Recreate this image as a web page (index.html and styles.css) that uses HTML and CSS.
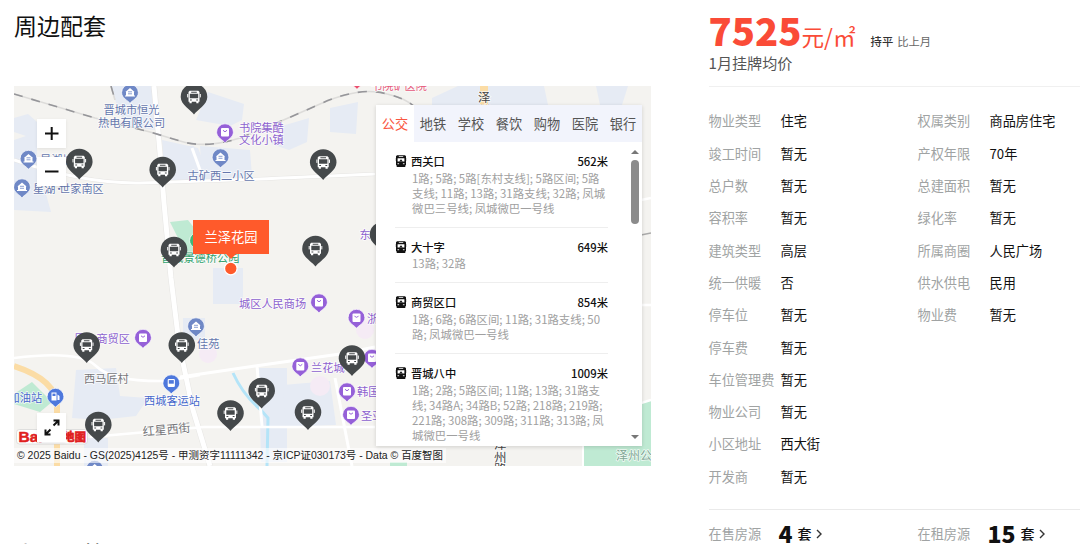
FILE: index.html
```html
<!DOCTYPE html>
<html lang="zh-CN">

<head>
    <meta charset="UTF-8">
    <meta name="viewport" content="width=device-width, initial-scale=1.0">
    <title>兰泽花园</title>
    <link rel="stylesheet" href="styles.css">
</head>

<body>
    <div class="wrapper">
        <div class="main">
            <h2 class="title">周边配套</h2>
            <div class="map">
                <svg class="map-bg" viewBox="14 86 637 380">
                    <defs>
                        <g id="bus">
                            <path d="M0 17.5 C-3 13 -13.3 8 -13.3 0 A13.3 13.3 0 0 1 13.3 0 C13.3 8 3 13 0 17.5Z" fill="#45494b" />
                            <path d="M-4.3 -6.3h8.6l1.2 1.3v9.8h-1v1.4h-2.2v-1.4h-4.6v1.4h-2.2v-1.4h-1v-9.8z" fill="#fff" />
                            <path d="M-6.3 -3v3.4M6.3 -3v3.4" stroke="#fff" stroke-width="1" />
                            <path d="M-4.2 -3.2h8.4v4.4h-8.4zM-2.8 -5.2h5.6v.9h-5.6zM-4 2.5h1.8v1h-1.8zM2.2 2.5h1.8v1h-1.8z" fill="#45494b" />
                        </g>
                        <path id="pin" d="M0 10.3 C-2 7.5 -8.4 5 -8.4 -.3 A8.4 8.4 0 0 1 8.4 -.3 C8.4 5 2 7.5 0 10.3Z" stroke="#fff" stroke-width=".7" />
                        <g id="shop">
                            <use href="#pin" fill="#9560d8" />
                            <rect x="-4" y="-4.5" width="8" height="8.5" rx="1" fill="#fff" />
                            <path d="M-2 -2.2q2 3 4 0" fill="none" stroke="#9560d8" stroke-width="1" />
                        </g>
                        <g id="home">
                            <use href="#pin" fill="#6f88c6" />
                            <path d="M-5 3.5V2.5h1V-1h-.6L0 -5l4.6 4H4v3.5h1v1z" fill="#fff" />
                            <path d="M-2 -1.2h4M-2 .8h4" stroke="#6f88c6" stroke-width=".8" />
                        </g>
                    </defs>

                    <rect x="14" y="86" width="637" height="380" fill="#f4f3f0" />
                    <!-- 地块 -->
                    <g fill="#e6ebf4">
                        <path d="M14 118l14-4 9 8v40l14 50-37-2v-70l12-4-12-4z" />
                        <path d="M111 86h42l2 44-30-4-8-20z" />
                        <path d="M162 140l36 8 12 30-45 4z" />
                        <path d="M180 146h14l12 34h-26z" />
                        <path d="M208 92l36 12-2 16-12 6-34-6z" />
                        <path d="M200 146l50 4 2 26-50 4z" />
                        <path d="M282 126l27-8-2 24-18 8-18-6z" />
                        <path d="M330 108l28-6-2 32-26-2z" />
                        <path d="M213 268h30v36h-30z" />
                        <path d="M76 370l40-2 4 28 28 2-12 18-36 4-28-2z" />
                        <path d="M84 438h24v28h-24z" />
                        <path d="M183 318h22v22h-22z" />
                        <path d="M259 368h28v94h-26z" />
                        <path d="M283 385l47-4 6 44-50 2z" />
                        <path d="M432 98l26-12h86l4 19H432z" />
                        <path d="M596 86h32l-6 19h-22z" />
                    </g>
                    <g fill="#f5ebf5">
                        <circle cx="208" cy="354" r="9" />
                        <circle cx="320" cy="386" r="10" />
                        <circle cx="365" cy="330" r="9" />
                    </g>
                    <g fill="#bfead3">
                        <path d="M14 394l18-12 20 20-12 10-26-8z" />
                        <path d="M170 222l18-2 14 18v16h-16z" />
                        <path d="M583 446l1-36 67-10v66h-68z" />
                        <path d="M390 462h17v4h-17z" />
                    </g>
                    <!-- 河 -->
                    <path d="M233 373q10 22 28 37l7 8-1 48" fill="none" stroke="#b4e4f8" stroke-width="3" />
                    <!-- 道路 -->
                    <g fill="none" stroke="#e6e5e3" stroke-linejoin="round">
                        <path d="M154 86l6 67 4 50 7 75 8 66 14 66 17 56" stroke-width="6" />
                        <path d="M14 160q70 24 126 23t235-9" stroke-width="4" />
                    </g>
                    <g fill="none" stroke="#fff" stroke-linejoin="round">
                        <path d="M154 86l6 67 4 50 7 75 8 66 14 66 17 56" stroke-width="5" />
                        <path d="M14 160q70 24 126 23t235-9" stroke-width="3" />
                        <path d="M14 358q66-8 82 8t70 15l34-6" stroke-width="2.5" />
                        <path d="M180 377l75-11 85-12 35-7" stroke-width="3" />
                        <path d="M90 437l114-10h171" stroke-width="2.5" />
                        <path d="M257 366l5 60M335 378l17 88" stroke-width="3" />
                        <path d="M192 148l12 33" stroke-width="3" />
                        <path d="M641 200l10-2M641 305h10M641 403l10-3" stroke-width="2.5" />
                        <path d="M583 446v20" stroke-width="2" />
                    </g>
                    <path d="M14 366q43 14 43 40v60" fill="none" stroke="#fbdca5" stroke-width="6" />
                    <path d="M484 86v20" stroke="#fbdca5" stroke-width="8" />
                    <!-- 铁路 -->
                    <g fill="none" stroke-width="1.6">
                        <path d="M14 94l81 24 55 14 30 9q25 8 60-3 40-16 80-34 40-18 67-10 18 4 28 13M111 86l4 14" stroke="#dddcda" />
                        <path d="M14 94l81 24 55 14 30 9q25 8 60-3 40-16 80-34 40-18 67-10 18 4 28 13M111 86l4 14" stroke="#96969a" stroke-dasharray="9 9" />
                        <path d="M641 235l10-2" stroke="#aaa" />
                    </g>

                    <!-- 地名 -->
                    <g class="label blue">
                        <text x="103.5" y="114">晋城市恒光</text>
                        <text x="98" y="126.5">热电有限公司</text>
                        <text x="187.5" y="179.5">古矿西二小区</text>
                        <text x="40" y="164">星湖城</text>
                        <text x="33" y="193">星湖<tspan x="53.5">·</tspan><tspan x="59">世家南区</tspan></text>
                        <text x="197" y="348">佳苑</text>
                    </g>
                    <g class="label purple">
                        <text x="239" y="131.5">书院集酷</text>
                        <text x="239" y="144">文化小镇</text>
                        <text x="239" y="307.5">城区人民商场</text>
                        <text x="74" y="343">凤台商贸区</text>
                        <text x="367" y="323">浙</text>
                        <text x="311" y="371.5">兰花城</text>
                        <text x="357" y="396">韩国</text>
                        <text x="361" y="420">圣亚</text>
                        <text x="359.5" y="239">东</text>
                    </g>
                    <g class="label sky">
                        <text x="144" y="404.5">西城客运站</text>
                        <text x="8.5" y="401.5">加油站</text>
                    </g>
                    <g class="label gray">
                        <text x="84" y="383">西马匠村</text>
                        <text x="143" y="436" transform="rotate(-5 143 436)" class="street">红星西街</text>
                    </g>
                    <g class="label dark">
                        <text x="478" y="101.5">泽</text>
                        <text x="478" y="115">州</text>
                        <text x="494" y="449">泽</text>
                        <text x="494" y="461.5">州</text>
                        <text x="494" y="474">路</text>
                    </g>
                    <text class="label green" x="161" y="262">晋城景德桥公园</text>
                    <text class="label park" x="616" y="459.5">泽州公园</text>
                    <text class="label red" x="371" y="90">书院矿医院</text>

                    <!-- 小图标 -->
                    <use href="#home" x="130" y="93" />
                    <use href="#home" x="28.5" y="159" />
                    <use href="#home" x="22" y="187.5" />
                    <use href="#home" x="220.5" y="157.5" />
                    <use href="#home" x="196" y="326.5" />
                    <use href="#shop" x="225" y="132.5" />
                    <use href="#shop" x="319" y="302.5" />
                    <use href="#shop" x="143" y="338" />
                    <use href="#shop" x="356.5" y="318" />
                    <use href="#shop" x="300.3" y="366.5" />
                    <use href="#shop" x="372" y="358" />
                    <use href="#shop" x="347" y="391.5" />
                    <use href="#shop" x="351" y="415" />
                    <use href="#pin" x="357" y="79" fill="#ea4f6e" />
                    <use href="#pin" x="198" y="241" fill="#3fb878" />
                    <g transform="translate(55.5 397)">
                        <use href="#pin" fill="#4e78dc" />
                        <path d="M-4 -4.5h5v8h-5zM2 -2.5l2 1.5v4h-2" fill="#fff" />
                        <path d="M-3 -3.4h3v2.4h-3z" fill="#4e78dc" />
                    </g>
                    <g transform="translate(171.3 383.5)">
                        <use href="#pin" fill="#4e78dc" />
                        <rect x="-3.6" y="-4.6" width="7.2" height="8" rx="1.2" fill="#fff" />
                        <path d="M-2.5 -3.4h5v3.6h-5z" fill="#4e78dc" />
                    </g>
                    <use href="#home" x="94.7" y="469" />

                    <!-- 百度 logo -->
                    <rect x="16.5" y="429.5" width="71" height="14.5" rx="3" fill="#fff" stroke="#ccc" stroke-width=".6" />
                    <text class="logo" x="18.5" y="442">Bai</text>
                    <text class="logo logo-cn" x="63" y="441">地图</text>

                    <!-- 公交站点 -->
                    <use href="#bus" x="194" y="97" />
                    <use href="#bus" x="79.3" y="162" />
                    <use href="#bus" x="162.7" y="170" />
                    <use href="#bus" x="174" y="250" />
                    <use href="#bus" x="323.2" y="162.5" />
                    <use href="#bus" x="315.5" y="249" />
                    <use href="#bus" x="383" y="235" />
                    <use href="#bus" x="86.7" y="345.5" />
                    <use href="#bus" x="181.8" y="345.5" />
                    <use href="#bus" x="98.3" y="425" />
                    <use href="#bus" x="230.5" y="413.5" />
                    <use href="#bus" x="261.7" y="391" />
                    <use href="#bus" x="308" y="412.5" />
                    <use href="#bus" x="352" y="358.5" />

                    <circle cx="230.8" cy="268.5" r="6.3" fill="#ff5a2b" stroke="#fff" stroke-width="1.3" />
                </svg>

                <div class="tip">兰泽花园</div>
                <div class="btn zoom-in"><svg viewBox="0 0 29 29"><path d="M8 14.5h13.5M14.7 8v13" /></svg></div>
                <div class="btn zoom-out"><svg viewBox="0 0 29 29"><path d="M8 14.5h13.5" /></svg></div>
                <div class="btn full"><svg viewBox="0 0 29 29"><path d="M16.5 7.5h5v5M21.5 7.5l-5 5M8.5 16.5v5h5M8.5 21.5l5-5" /></svg></div>
                <div class="copyright">© 2025 Baidu - GS(2025)4125号 - 甲测资字11111342 - 京ICP证030173号 - Data © 百度智图</div>

                <div class="panel">
                    <ul class="tabs">
                        <li class="active">公交</li>
                        <li>地铁</li>
                        <li>学校</li>
                        <li>餐饮</li>
                        <li>购物</li>
                        <li>医院</li>
                        <li>银行</li>
                    </ul>
                    <div class="content">
                        <ul class="list">
                            <li>
                                <div class="name">
                                    <svg class="ico" viewBox="0 0 12 12"><use href="#train" /></svg>
                                    <span>西关口</span><em>562米</em>
                                </div>
                                <p>1路; 5路; 5路[东村支线]; 5路区间; 5路<br>支线; 11路; 13路; 31路支线; 32路; 凤城<br>微巴三号线; 凤城微巴一号线</p>
                            </li>
                            <li>
                                <div class="name">
                                    <svg class="ico" viewBox="0 0 12 12"><use href="#train" /></svg>
                                    <span>大十字</span><em>649米</em>
                                </div>
                                <p>13路; 32路</p>
                            </li>
                            <li>
                                <div class="name">
                                    <svg class="ico" viewBox="0 0 12 12"><use href="#train" /></svg>
                                    <span>商贸区口</span><em>854米</em>
                                </div>
                                <p>1路; 6路; 6路区间; 11路; 31路支线; 50<br>路; 凤城微巴一号线</p>
                            </li>
                            <li>
                                <div class="name">
                                    <svg class="ico" viewBox="0 0 12 12">
                                        <g id="train">
                                            <path d="M2 .2h8L11 1.2v8.8L10 11l.6 1H1.4L2 11l-1-1V1.2z" fill="#111" />
                                            <path d="M2.6 3.2h6.8v3.3H2.6zM3.8 1.3h4.4v.7H3.8z" fill="#fff" />
                                            <path d="M4.2 6.5L6 4.2l1.8 2.3z" fill="#111" />
                                            <path d="M2.5 8h1.6v1.2H2.5zM7.9 8h1.6v1.2H7.9zM0 3h.6v3H0zM11.4 3h.6v3h-.6z" fill="#bbb" />
                                        </g>
                                    </svg>
                                    <span>晋城八中</span><em>1009米</em>
                                </div>
                                <p>1路; 2路; 5路区间; 11路; 13路; 31路支<br>线; 34路A; 34路B; 52路; 218路; 219路;<br>221路; 308路; 309路; 311路; 313路; 凤<br>城微巴一号线</p>
                            </li>
                        </ul>
                        <div class="scroll">
                            <i class="up"></i>
                            <i class="thumb"></i>
                            <i class="down"></i>
                        </div>
                    </div>
                </div>
            </div>
            <h2 class="title next">小区问答</h2>
        </div>

        <div class="side">
            <div class="price">
                <div class="num"><b>7525</b><span class="unit">元/㎡</span><span class="trend">持平</span><span class="compare">比上月</span></div>
                <p>1月挂牌均价</p>
            </div>
            <div class="info">
                <div class="cell"><label>物业类型</label><span>住宅</span></div>
                <div class="cell"><label>权属类别</label><span>商品房住宅</span></div>
                <div class="cell"><label>竣工时间</label><span>暂无</span></div>
                <div class="cell"><label>产权年限</label><span>70年</span></div>
                <div class="cell"><label>总户数</label><span>暂无</span></div>
                <div class="cell"><label>总建面积</label><span>暂无</span></div>
                <div class="cell"><label>容积率</label><span>暂无</span></div>
                <div class="cell"><label>绿化率</label><span>暂无</span></div>
                <div class="cell"><label>建筑类型</label><span>高层</span></div>
                <div class="cell"><label>所属商圈</label><span>人民广场</span></div>
                <div class="cell"><label>统一供暖</label><span>否</span></div>
                <div class="cell"><label>供水供电</label><span>民用</span></div>
                <div class="cell"><label>停车位</label><span>暂无</span></div>
                <div class="cell"><label>物业费</label><span>暂无</span></div>
                <div class="cell row"><label>停车费</label><span>暂无</span></div>
                <div class="cell row"><label>车位管理费</label><span>暂无</span></div>
                <div class="cell row"><label>物业公司</label><span>暂无</span></div>
                <div class="cell row"><label>小区地址</label><span>西大街</span></div>
                <div class="cell row"><label>开发商</label><span>暂无</span></div>
            </div>
            <div class="house">
                <div class="cell"><label>在售房源</label><b>4</b><span>套</span><svg class="arrow" viewBox="0 0 6 10"><path d="M1 1l4 4-4 4" /></svg></div>
                <div class="cell"><label>在租房源</label><b>15</b><span>套</span><svg class="arrow" viewBox="0 0 6 10"><path d="M1 1l4 4-4 4" /></svg></div>
            </div>
        </div>
    </div>
</body>

</html>
```
FILE: styles.css
```css
* {
    padding: 0;
    margin: 0;
    list-style: none;
    box-sizing: border-box;
}

body {
    height: 544px;
    overflow: hidden;
    background-color: #fff;
    font-family: "Noto Sans CJK SC", sans-serif;
    color: #111;
}

.wrapper {
    display: flex;
    height: 544px;
    padding-left: 14px;
    overflow: hidden;
}

.main {
    width: 637px;
    flex-shrink: 0;
}

.title {
    height: 86px;
    padding-top: 8px;
    font-size: 23px;
    font-weight: 400;
    line-height: 34px;
}

.title.next {
    margin-top: 62px;
}

/* 地图 */
.map {
    position: relative;
    height: 380px;
    overflow: hidden;
}

.map-bg {
    display: block;
    width: 637px;
    height: 380px;
}

.label {
    font-size: 11.2px;
    paint-order: stroke;
    stroke: #fff;
    stroke-width: 1.5px;
    stroke-opacity: .8;
}

.blue {
    fill: #6577ad;
}

.purple {
    fill: #8d62cf;
}

.sky {
    fill: #4668cc;
}

.gray {
    fill: #77777a;
}

.street {
    font-size: 12px;
}

.dark {
    font-size: 12.5px;
    fill: #444;
}

.green {
    fill: #2fa06c;
}

.park {
    font-size: 12px;
    fill: #7fa694;
}

.red {
    fill: #e5587a;
}

.logo {
    font-family: "Liberation Sans", sans-serif;
    font-size: 15.5px;
    font-weight: 700;
    fill: #e02020;
    stroke: #e02020;
    stroke-width: .5px;
}

.logo-cn {
    font-family: "Noto Sans CJK SC", sans-serif;
    font-size: 11.5px;
    font-weight: 900;
}

.tip {
    position: absolute;
    left: 179px;
    top: 134px;
    width: 76px;
    height: 34px;
    background-color: #ff5a2b;
    color: #fff;
    font-size: 13.3px;
    line-height: 34px;
    text-align: center;
}

.tip::after {
    content: '';
    position: absolute;
    left: 33px;
    top: 34px;
    border: 5px solid transparent;
    border-top-color: #ff5a2b;
    border-bottom: 0;
}

.btn {
    position: absolute;
    left: 23px;
    width: 29px;
    height: 29px;
    background-color: #fff;
    box-shadow: 0 1px 3px rgba(0, 0, 0, .08);
}

.btn svg {
    display: block;
    fill: none;
    stroke: #111;
    stroke-width: 2;
}

.zoom-in {
    top: 33px;
}

.zoom-out {
    top: 71px;
}

.full {
    top: 327px;
}

.copyright {
    position: absolute;
    left: 0;
    bottom: 3px;
    padding: 0 3px;
    background-color: rgba(255, 255, 255, .6);
    font: 10.46px/15px "Liberation Sans", "Noto Sans CJK SC", sans-serif;
    color: #222;
    white-space: nowrap;
}

/* 右侧面板 */
.panel {
    position: absolute;
    left: 362px;
    top: 19px;
    width: 266px;
    height: 341px;
    background-color: #fff;
    box-shadow: 0 1px 4px rgba(0, 0, 0, .15);
}

.tabs {
    display: flex;
    height: 37px;
    background-color: #f2f4fc;
}

.tabs li {
    width: 38px;
    font-size: 13.2px;
    line-height: 38px;
    text-align: center;
    color: #555;
}

.tabs .active {
    background-color: #fff;
    color: #fa5741;
}

.content {
    display: flex;
    justify-content: space-between;
    height: 304px;
    overflow: hidden;
}

.list {
    width: 213px;
    margin-left: 19px;
}

.list li {
    padding: 11px 0 10.7px;
    border-bottom: 1px solid #eee;
}

.name {
    display: flex;
    align-items: center;
    height: 15.4px;
    margin-bottom: 2.2px;
    font-size: 11.3px;
    font-weight: 500;
}

.ico {
    width: 12px;
    height: 12px;
    margin-right: 4px;
}

.name em {
    margin-left: auto;
    font-style: normal;
}

.list p {
    padding-left: 17px;
    font-size: 11.4px;
    line-height: 15.2px;
    color: #a0a0a0;
    white-space: nowrap;
}

.scroll {
    display: flex;
    flex-direction: column;
    align-items: center;
    width: 9px;
    margin-right: 3px;
    padding: 8px 0 7px;
}

.scroll .up {
    border: 4px solid transparent;
    border-top: 0;
    border-bottom-color: #777;
}

.scroll .thumb {
    width: 8px;
    height: 64px;
    margin-top: 6px;
    border-radius: 4px;
    background-color: #8b8b8b;
}

.scroll .down {
    margin-top: auto;
    border: 4px solid transparent;
    border-bottom: 0;
    border-top-color: #777;
}

/* 小区信息 */
.side {
    flex: 1;
    margin-left: 57.5px;
}

.price {
    height: 87px;
    border-bottom: 1px solid #f0f0f0;
}

.num {
    display: flex;
    align-items: baseline;
    height: 51px;
    line-height: 59px;
    color: #fa4b37;
}

.num b {
    font-size: 38.2px;
    font-weight: 900;
}

.unit {
    font-size: 22.6px;
}

.trend {
    margin-left: 15px;
    font-size: 11.3px;
    font-weight: 500;
    color: #333;
}

.compare {
    margin-left: 4px;
    font-size: 11.3px;
    color: #666;
}

.price p {
    font-size: 15.1px;
    line-height: 23px;
    color: #555;
}

.info {
    display: grid;
    grid-template-columns: 209px 1fr;
    grid-auto-rows: 32.3px;
    height: 423px;
    padding-top: 17.8px;
    border-bottom: 1px solid #eaeaea;
}

.cell {
    display: flex;
    align-items: center;
    font-size: 13.2px;
}

.row {
    grid-column: 1 / 3;
}

.cell label {
    width: 72px;
    color: #a0a3a3;
    white-space: nowrap;
}

.house {
    display: grid;
    grid-template-columns: 209px 1fr;
    height: 46px;
}

.house label {
    width: 70px;
}

.house b {
    margin-right: 5px;
    font-size: 23px;
    font-weight: 900;
    line-height: 30px;
}

.house span {
    font-size: 14px;
    font-weight: 500;
}

.arrow {
    width: 6px;
    height: 10px;
    margin-top: 1px;
    margin-left: 4px;
    fill: none;
    stroke: #333;
    stroke-width: 1.4;
}
```
